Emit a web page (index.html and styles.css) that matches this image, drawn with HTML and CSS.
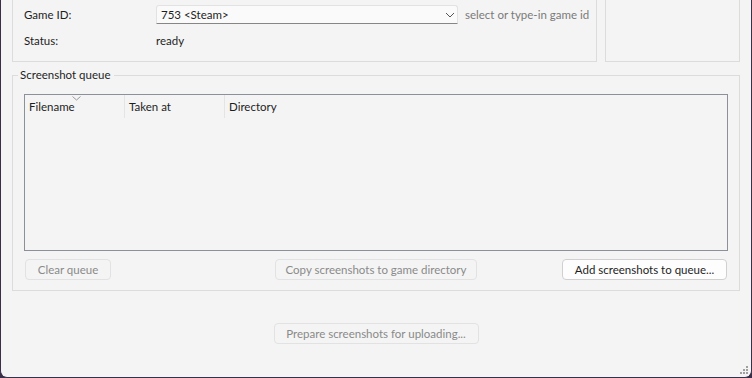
FILE: index.html
```html
<!DOCTYPE html>
<html lang="en">

<head>
    <meta charset="UTF-8">
    <meta name="viewport" content="width=device-width, initial-scale=1.0">
    <title>Screenshot uploader</title>
    <link rel="stylesheet" href="styles.css">
</head>

<body>
    <div class="window">
        <div class="top-row">
            <div class="group game-box">
                <div class="form-row">
                    <span class="label">Game ID:</span>
                    <div class="combo">
                        <span>753 &lt;Steam&gt;</span>
                        <svg class="chevron" width="10" height="6" viewBox="0 0 10 6">
                            <path d="M1 1 L5 5 L9 1" fill="none" stroke="#555" stroke-width="1"/>
                        </svg>
                    </div>
                    <span class="hint">select or type-in game id</span>
                </div>
                <div class="form-row status-row">
                    <span class="label">Status:</span>
                    <span class="value">ready</span>
                </div>
            </div>
            <div class="group side-box"></div>
        </div>

        <fieldset class="queue">
            <legend>Screenshot queue</legend>
            <div class="list">
                <div class="list-head">
                    <div class="col col-name">
                        Filename
                        <svg class="sort" width="9" height="5" viewBox="0 0 9 5">
                            <path d="M0.5 0.5 L4.5 4 L8.5 0.5" fill="none" stroke="#9a9a9a" stroke-width="1"/>
                        </svg>
                    </div>
                    <div class="col col-time">Taken at</div>
                    <div class="col col-dir">Directory</div>
                </div>
            </div>
            <div class="queue-buttons">
                <button class="btn btn-left" disabled>Clear queue</button>
                <button class="btn" disabled>Copy screenshots to game directory</button>
                <button class="btn btn-right">Add screenshots to queue...</button>
            </div>
        </fieldset>

        <div class="bottom-row">
            <button class="btn btn-prepare" disabled>Prepare screenshots for uploading...</button>
        </div>

        <svg class="grip" width="10" height="10" viewBox="0 0 10 10">
            <rect x="7" y="1" width="2" height="2" fill="#a0a0a0"/>
            <rect x="4" y="4" width="2" height="2" fill="#a0a0a0"/>
            <rect x="7" y="4" width="2" height="2" fill="#a0a0a0"/>
            <rect x="1" y="7" width="2" height="2" fill="#a0a0a0"/>
            <rect x="4" y="7" width="2" height="2" fill="#a0a0a0"/>
            <rect x="7" y="7" width="2" height="2" fill="#a0a0a0"/>
        </svg>
    </div>
</body>

</html>
```

FILE: styles.css
```css
* {
    margin: 0;
    padding: 0;
    box-sizing: border-box;
}

body {
    background: #3b2e48;
    font-family: Lato, "Liberation Sans", sans-serif;
    font-size: 11.5px;
    color: #1e1e1e;
}

.window {
    position: relative;
    height: 378px;
    background: #f4f4f4;
    border-left: 1px solid #3b2e48;
    border-right: 1px solid #3b2e48;
    border-bottom: 1px solid #3b2e48;
    border-radius: 0 0 7px 7px;
}

.top-row {
    display: flex;
    gap: 8px;
    padding: 0 11px;
    height: 62px;
}

.group {
    border: 1px solid #dcdcdc;
    border-top: none;
}

.game-box {
    width: 585px;
    padding: 5px 0 0 11px;
}

.side-box {
    width: 135px;
}

.form-row {
    display: flex;
    align-items: center;
    height: 19px;
}

.label {
    width: 132px;
}

.combo {
    width: 302px;
    height: 19px;
    display: flex;
    align-items: center;
    justify-content: space-between;
    padding: 0 2px 0 4px;
    background: #fafafa;
    border: 1px solid #e2e2e2;
    border-bottom-color: #868686;
    border-radius: 3px 3px 0 0;
}

.hint {
    margin-left: 7px;
    color: #7a7a7a;
}

.status-row {
    margin-top: 7px;
}

.queue {
    margin: 5px 11px 0;
    border: 1px solid #dcdcdc;
    padding: 11px 11px 10px;
}

.queue legend {
    margin-left: -6px;
    padding: 0 3px 0 2px;
    line-height: 16px;
}

.list {
    height: 157px;
    border: 1px solid #8c9099;
    background: #f4f4f4;
}

.list-head {
    display: flex;
    height: 23px;
}

.col {
    position: relative;
    padding: 5px 0 0 4px;
    border-right: 1px solid #e4e4e4;
}

.col-name {
    width: 100px;
}

.col-time {
    width: 100px;
}

.col-dir {
    width: 100px;
    border-right: none;
}

.sort {
    position: absolute;
    top: 1px;
    left: 47px;
}

.queue-buttons {
    display: grid;
    grid-template-columns: 1fr auto 1fr;
    margin-top: 8px;
    padding: 0 1px;
}

.btn {
    height: 21px;
    font-family: inherit;
    font-size: 11.5px;
    color: #1e1e1e;
    background: #fdfdfd;
    border: 1px solid #d0d0d0;
    border-radius: 4px;
}

.btn:disabled {
    color: #8a8a8a;
    background: #f4f4f4;
    border-color: #e2e2e2;
}

.btn-left {
    justify-self: start;
    width: 86px;
}

.queue-buttons .btn:nth-child(2) {
    width: 202px;
}

.btn-right {
    justify-self: end;
    width: 165px;
}

.bottom-row {
    display: flex;
    justify-content: center;
    margin-top: 32px;
}

.btn-prepare {
    width: 205px;
}

.grip {
    position: absolute;
    right: 2px;
    bottom: 2px;
}
```
